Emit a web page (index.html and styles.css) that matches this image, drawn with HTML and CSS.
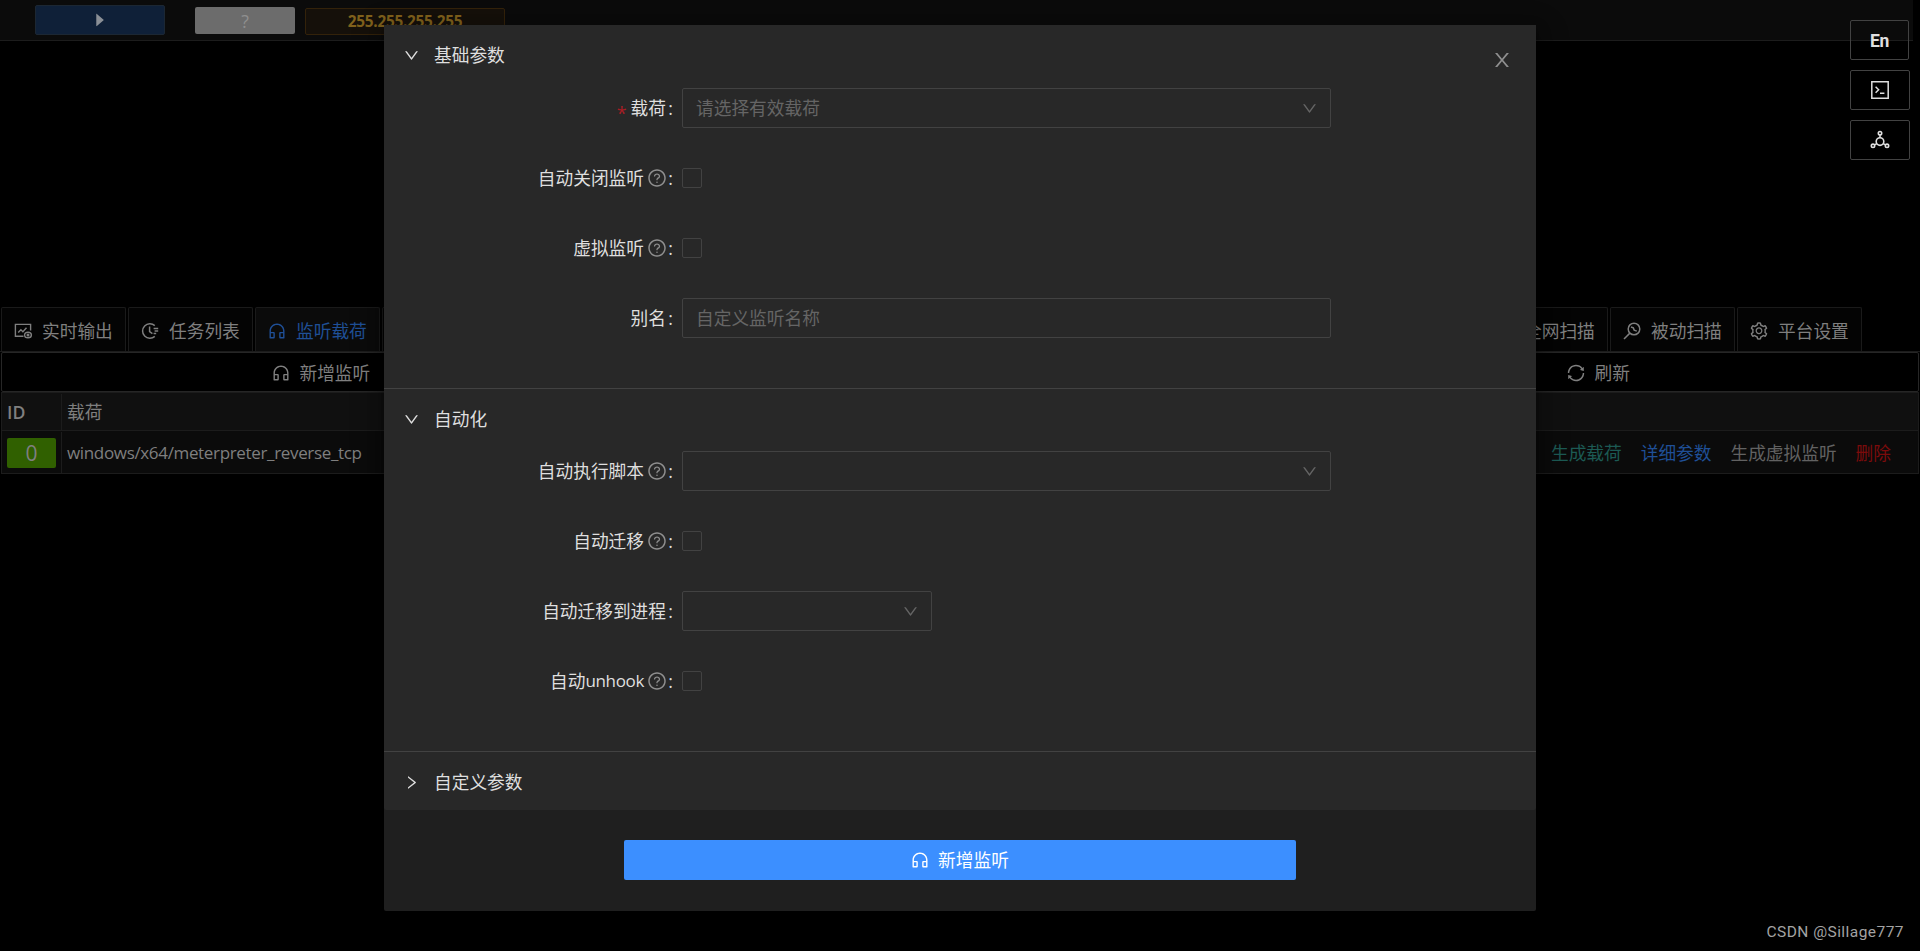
FILE: index.html
```html
<!DOCTYPE html>
<html lang="zh-CN">
<head>
<meta charset="UTF-8">
<title>监听载荷</title>
<link rel="stylesheet" href="styles.css">
</head>
<body>

<svg class="sprite">
    <symbol id="down" viewBox="0 0 1024 1024"><path d="M884 256h-75c-5.1 0-9.9 2.5-12.9 6.6L512 654.2 227.9 262.6c-3-4.1-7.8-6.6-12.9-6.6h-75c-6.5 0-10.3 7.4-6.5 12.7l352.6 486.1c12.8 17.6 39 17.6 51.7 0l352.6-486.1c3.9-5.3.1-12.7-6.4-12.7z"/></symbol>
    <symbol id="right" viewBox="0 0 1024 1024"><path d="M765.7 486.8L314.9 134.7A7.97 7.97 0 00302 141v77.3c0 4.9 2.3 9.6 6.1 12.6l360 281.1-360 281.1c-3.9 3-6.1 7.7-6.1 12.6V883c0 6.7 7.7 10.4 12.9 6.3l450.8-352.1a31.96 31.96 0 000-50.4z"/></symbol>
    <symbol id="close" viewBox="0 0 1024 1024"><path d="M563.8 512l262.5-312.9c4.4-5.2.7-13.1-6.1-13.1h-79.8c-4.7 0-9.2 2.1-12.3 5.7L511.6 449.8 295.1 191.7c-3-3.6-7.5-5.7-12.3-5.7H203c-6.8 0-10.5 7.9-6.1 13.1L459.4 512 196.9 824.9A7.95 7.95 0 00203 838h79.8c4.7 0 9.2-2.1 12.3-5.7l216.5-258.1 216.5 258.1c3 3.6 7.5 5.7 12.3 5.7h79.8c6.8 0 10.5-7.9 6.1-13.1L563.8 512z"/></symbol>
    <symbol id="question" viewBox="0 0 1024 1024"><path d="M512 64C264.6 64 64 264.6 64 512s200.6 448 448 448 448-200.6 448-448S759.4 64 512 64zm0 820c-205.4 0-372-166.6-372-372s166.6-372 372-372 372 166.6 372 372-166.6 372-372 372z"/><path d="M623.6 316.7C593.6 290.4 554 276 512 276s-81.6 14.5-111.6 40.7C369.2 344 352 380.7 352 420v7.6c0 4.4 3.6 8 8 8h48c4.4 0 8-3.6 8-8V420c0-44.1 43.1-80 96-80s96 35.9 96 80c0 31.1-22 59.6-56.1 72.7-21.2 8.1-39.2 22.3-52.1 40.9-13.1 19-19.9 41.8-19.9 64.9V620c0 4.4 3.6 8 8 8h48c4.4 0 8-3.6 8-8v-22.7a48.3 48.3 0 0130.9-44.8c59-22.7 97.1-74.7 97.1-132.5.1-39.3-17.1-76-48.3-103.3zM472 732a40 40 0 1080 0 40 40 0 10-80 0z"/></symbol>
    <symbol id="caret" viewBox="0 0 1024 1024"><path d="M715.8 493.5L335 165.1c-14.2-12.2-35-1.2-35 18.5v656.8c0 19.7 20.8 30.7 35 18.5l380.8-328.4c10.9-9.4 10.9-27.6 0-37z"/></symbol>
    <symbol id="headset" viewBox="0 0 1024 1024"><path d="M512 128c-212.1 0-384 171.9-384 384v360c0 13.3 10.7 24 24 24h184c35.3 0 64-28.7 64-64V624c0-35.3-28.7-64-64-64H200v-48c0-172.3 139.7-312 312-312s312 139.7 312 312v48H688c-35.3 0-64 28.7-64 64v208c0 35.3 28.7 64 64 64h184c13.3 0 24-10.7 24-24V512c0-212.1-171.9-384-384-384zM328 632v192H200V632h128zm496 192H696V632h128v192z"/></symbol>
    <symbol id="sync" viewBox="0 0 1024 1024"><path d="M168 504.2c1-43.7 10-86.1 26.9-126 17.3-41 42.1-77.7 73.7-109.4S337 212.3 378 195c42.4-17.9 87.4-27 133.9-27s91.5 9.1 133.8 27A341.5 341.5 0 01755 268.8c9.9 9.9 19.2 20.4 27.8 31.4l-60.2 47a8 8 0 003 14.1l175.7 43c5 1.2 9.9-2.6 9.9-7.7l.8-180.9c0-6.7-7.7-10.5-12.9-6.3l-56.4 44.1C765.8 155.1 646.2 92 511.8 92 282.7 92 96.3 275.6 92 503.8a8 8 0 008 8.2h60c4.4 0 7.9-3.5 8-7.8zm756 7.8h-60c-4.4 0-7.9 3.5-8 7.8-1 43.7-10 86.1-26.9 126-17.3 41-42.1 77.8-73.7 109.4A342.45 342.45 0 01512.1 856a342.24 342.24 0 01-243.2-100.8c-9.9-9.9-19.2-20.4-27.8-31.4l60.2-47a8 8 0 00-3-14.1l-175.7-43c-5-1.2-9.9 2.6-9.9 7.7l-.7 181c0 6.7 7.7 10.5 12.9 6.3l56.4-44.1C258.2 868.9 377.8 932 512.2 932c229.2 0 415.5-183.7 419.8-411.8a8 8 0 00-8-8.2z"/></symbol>
    <symbol id="setting" viewBox="0 0 1024 1024"><path d="M924.8 625.7l-65.5-56c3.1-19 4.7-38.4 4.7-57.8s-1.6-38.8-4.7-57.8l65.5-56a32.03 32.03 0 009.3-35.2l-.9-2.6a443.74 443.74 0 00-79.7-137.9l-1.8-2.1a32.12 32.12 0 00-35.1-9.5l-81.3 28.9c-30-24.6-63.5-44-99.7-57.6l-15.7-85a32.05 32.05 0 00-25.8-25.7l-2.7-.5c-52.1-9.4-106.9-9.4-159 0l-2.7.5a32.05 32.05 0 00-25.8 25.7l-15.8 85.4a351.86 351.86 0 00-99 57.4l-81.9-29.1a32 32 0 00-35.1 9.5l-1.8 2.1a446.02 446.02 0 00-79.7 137.9l-.9 2.6c-4.5 12.5-.8 26.5 9.3 35.2l66.3 56.6c-3.1 18.8-4.6 38-4.6 57.1 0 19.2 1.5 38.4 4.6 57.1L99 625.5a32.03 32.03 0 00-9.3 35.2l.9 2.6c18.1 50.4 44.9 96.9 79.7 137.9l1.8 2.1a32.12 32.12 0 0035.1 9.5l81.9-29.1c29.8 24.5 63.1 43.9 99 57.4l15.8 85.4a32.05 32.05 0 0025.8 25.7l2.7.5a449.4 449.4 0 00159 0l2.7-.5a32.05 32.05 0 0025.8-25.7l15.7-85a350 350 0 0099.7-57.6l81.3 28.9a32 32 0 0035.1-9.5l1.8-2.1c34.8-41.1 61.6-87.5 79.7-137.9l.9-2.6c4.5-12.3.8-26.3-9.3-35zM788.3 465.9c2.5 15.1 3.8 30.6 3.8 46.1s-1.3 31-3.8 46.1l-6.6 40.1 74.7 63.9a370.03 370.03 0 01-42.6 73.6L721 702.8l-31.4 25.8c-23.9 19.6-50.5 35-79.3 45.8l-38.1 14.3-17.9 97a377.5 377.5 0 01-85 0l-17.9-97.2-37.8-14.5c-28.5-10.8-55-26.2-78.7-45.7l-31.4-25.9-93.4 33.2c-17-22.9-31.2-47.6-42.6-73.6l75.5-64.5-6.5-40c-2.4-14.9-3.7-30.3-3.7-45.5 0-15.3 1.2-30.6 3.7-45.5l6.5-40-75.5-64.5c11.3-26.1 25.6-50.7 42.6-73.6l93.4 33.2 31.4-25.9c23.7-19.5 50.2-34.9 78.7-45.7l37.9-14.3 17.9-97.2c28.1-3.2 56.8-3.2 85 0l17.9 97 38.1 14.3c28.7 10.8 55.4 26.2 79.3 45.8l31.4 25.8 92.8-32.9c17 22.9 31.2 47.6 42.6 73.6L781.8 426l6.5 39.9zM512 326c-97.2 0-176 78.8-176 176s78.8 176 176 176 176-78.8 176-176-78.8-176-176-176zm79.2 255.2A111.6 111.6 0 01512 614c-29.9 0-58-11.7-79.2-32.8A111.6 111.6 0 01400 502c0-29.9 11.7-58 32.8-79.2C454 401.6 482.1 390 512 390c29.9 0 58 11.6 79.2 32.8A111.6 111.6 0 01624 502c0 29.9-11.7 58-32.8 79.2z"/></symbol>
    <symbol id="fund" viewBox="-1 -1 20 20"><g fill="none" stroke="currentColor" stroke-width="1.4"><path d="M9.5 14.3H1.4V2.4h15.2v6"/><path d="M4.2 10.6l2.7-2.9 2 2 3.6-4"/><ellipse cx="14" cy="13" rx="3.4" ry="2.8"/><circle cx="14" cy="13" r=".8"/></g></symbol>
    <symbol id="time" viewBox="-1 -1 20 20"><g fill="none" stroke="currentColor" stroke-width="1.5"><path d="M13.8 3.6A7.3 7.3 0 1 0 13.8 14.4"/><path d="M8.6 4.6v5l2.8 2"/><path d="M12.6 6.6h4.6M13.6 9h3.6M12.6 11.4h2.6"/></g></symbol>
    <symbol id="scan" viewBox="-1 -1 20 20"><g fill="none" stroke="currentColor" stroke-width="1.5"><circle cx="11" cy="7" r="5.8"/><path d="M6.9 11.1L1 17"/><path d="M8 5l2.3.9.9 2.2 2.6 1"/></g></symbol>
    <symbol id="code" viewBox="-1 -1 20 20"><g fill="none" stroke="currentColor" stroke-width="1.5"><path d="M.8.8h16.4v16.4H.8z"/><path d="M4.6 5.8l3 3-3 3M9 12.2h4.4"/></g></symbol>
    <symbol id="unit" viewBox="-1 -1 20 20"><g fill="none" stroke="currentColor" stroke-width="1.6"><circle cx="9" cy="10.6" r="3.8"/><circle cx="9" cy="2.2" r="1.7"/><circle cx="2" cy="14.8" r="1.7"/><circle cx="16" cy="14.8" r="1.7"/><path d="M9 4v2.8M5.8 12.6l-2.4 1.3M12.2 12.6l2.4 1.3"/></g></symbol>
</svg>

<div class="page">
    <div class="topbar">
        <div class="btn-run"><svg class="icon"><use href="#caret"/></svg></div>
        <div class="btn-unknown">?</div>
        <div class="ip-tag">255.255.255.255</div>
    </div>

    <div class="tabs">
        <div class="tab"><svg class="icon"><use href="#fund"/></svg>实时输出</div>
        <div class="tab"><svg class="icon"><use href="#time"/></svg>任务列表</div>
        <div class="tab active"><svg class="icon"><use href="#headset"/></svg>监听载荷</div>
        <div class="tab tab-rest"></div>
        <div class="tab"><svg class="icon"><use href="#scan"/></svg>全网扫描</div>
        <div class="tab"><svg class="icon"><use href="#scan"/></svg>被动扫描</div>
        <div class="tab"><svg class="icon"><use href="#setting"/></svg>平台设置</div>
    </div>

    <div class="toolbar">
        <div class="tool"><svg class="icon"><use href="#headset"/></svg>新增监听</div>
        <div class="tool"></div>
        <div class="tool"><svg class="icon"><use href="#sync"/></svg>刷新</div>
    </div>

    <div class="table">
        <div class="row head">
            <div class="cell-id">ID</div>
            <div class="cell-main">载荷</div>
        </div>
        <div class="row">
            <div class="cell-id"><span class="badge">0</span></div>
            <div class="cell-main latin">windows/x64/meterpreter_reverse_tcp</div>
            <div class="actions">
                <a class="teal">生成载荷</a>
                <a class="blue">详细参数</a>
                <a class="grey">生成虚拟监听</a>
                <a class="red">删除</a>
            </div>
        </div>
    </div>
</div>

<div class="modal">
    <svg class="icon modal-close"><use href="#close"/></svg>
    <div class="section">
        <div class="section-head"><svg class="icon"><use href="#down"/></svg>基础参数</div>
        <div class="form">
            <div class="field">
                <div class="label"><i>*</i>载荷<b>:</b></div>
                <div class="input">请选择有效载荷<svg class="icon"><use href="#down"/></svg></div>
            </div>
            <div class="field">
                <div class="label">自动关闭监听<svg class="icon"><use href="#question"/></svg><b>:</b></div>
                <div class="checkbox"></div>
            </div>
            <div class="field">
                <div class="label">虚拟监听<svg class="icon"><use href="#question"/></svg><b>:</b></div>
                <div class="checkbox"></div>
            </div>
            <div class="field">
                <div class="label">别名<b>:</b></div>
                <div class="input">自定义监听名称</div>
            </div>
        </div>
    </div>
    <div class="section">
        <div class="section-head"><svg class="icon"><use href="#down"/></svg>自动化</div>
        <div class="form form-auto">
            <div class="field">
                <div class="label">自动执行脚本<svg class="icon"><use href="#question"/></svg><b>:</b></div>
                <div class="input"><svg class="icon"><use href="#down"/></svg></div>
            </div>
            <div class="field">
                <div class="label">自动迁移<svg class="icon"><use href="#question"/></svg><b>:</b></div>
                <div class="checkbox"></div>
            </div>
            <div class="field">
                <div class="label">自动迁移到进程<b>:</b></div>
                <div class="input short"><svg class="icon"><use href="#down"/></svg></div>
            </div>
            <div class="field">
                <div class="label">自动<span class="latin">unhook</span><svg class="icon"><use href="#question"/></svg><b>:</b></div>
                <div class="checkbox"></div>
            </div>
        </div>
    </div>
    <div class="section">
        <div class="section-head"><svg class="icon"><use href="#right"/></svg>自定义参数</div>
    </div>
    <div class="modal-footer">
        <div class="btn-submit"><svg class="icon"><use href="#headset"/></svg>新增监听</div>
    </div>
</div>

<div class="float-buttons">
    <div class="float-btn lang">En</div>
    <div class="float-btn"><svg class="icon"><use href="#code"/></svg></div>
    <div class="float-btn"><svg class="icon"><use href="#unit"/></svg></div>
</div>

<div class="watermark">CSDN @Sillage777</div>

</body>
</html>
```
FILE: styles.css
```css
* {
    box-sizing: border-box;
}

body {
    margin: 0;
    height: 951px;
    overflow: hidden;
    position: relative;
    background: #000;
    color: #7f7f7f;
    font-family: "Open Sans", "Noto Sans CJK SC", sans-serif;
    font-size: 17.7px;
    line-height: 28px;
}

.sprite {
    display: none;
}

.icon {
    width: 20px;
    height: 20px;
    fill: currentColor;
    flex: none;
}

.latin {
    font-size: 17px;
    letter-spacing: -.34px;
}

/* top bar */
.topbar {
    display: flex;
    align-items: flex-start;
    width: 1913px;
    height: 41px;
    padding-left: 35px;
    background: #0b0b0b;
    border-bottom: 1px solid #1c1c1c;
}

.btn-run {
    display: flex;
    align-items: center;
    justify-content: center;
    width: 130px;
    height: 30px;
    margin-top: 5px;
    background: #0f2038;
    border: 1px solid #1c2733;
    border-radius: 2px;
    color: #8a8f96;
}

.btn-run .icon {
    width: 18px;
    height: 18px;
}

.btn-unknown {
    width: 100px;
    height: 27px;
    margin: 7px 10px 0 30px;
    background: #6c6c6c;
    border-radius: 2px;
    color: #8f8f8f;
    text-align: center;
    line-height: 28px;
}

.ip-tag {
    width: 200px;
    height: 27px;
    margin-top: 8px;
    background: #15100a;
    border: 1px solid #33220a;
    border-radius: 2px;
    color: #80611c;
    font-size: 15.4px;
    font-weight: bold;
    letter-spacing: -.3px;
    line-height: 26px;
    text-align: center;
}

/* tabs */
.tabs {
    display: flex;
    gap: 2px;
    margin-top: 266px;
    padding-left: 1px;
    border-bottom: 1px solid #1c1c1c;
}

.tab {
    display: flex;
    align-items: center;
    gap: 9px;
    width: 125px;
    height: 44px;
    padding: 2px 0 0 11px;
    flex: none;
    white-space: nowrap;
    background: #040404;
    border: 1px solid #1a1a1a;
    border-bottom: none;
    border-radius: 2px 2px 0 0;
}

.tab.active {
    background: #0b0b0b;
    color: #1f4f96;
}

.tab-rest {
    width: 1099px;
}

/* card toolbar */
.toolbar {
    display: grid;
    grid-template-columns: repeat(3, 1fr);
    height: 40px;
    margin: 0 1px;
    border: 1px solid #262626;
    border-radius: 2px;
}

.tool {
    display: flex;
    align-items: center;
    justify-content: center;
    gap: 8px;
    padding: 1px 1px 0 0;
}

/* listener table */
.table {
    margin: 0 1px;
    border: 1px solid #1c1c1c;
    background: #0b0b0b;
}

.row {
    display: flex;
    align-items: center;
    height: 42px;
    padding-top: 1px;
}

.row.head {
    height: 38px;
    background: #101010;
    border-bottom: 1px solid #1c1c1c;
}

.cell-id {
    display: flex;
    align-items: center;
    align-self: stretch;
    width: 60px;
    padding-left: 5px;
    border-right: 1px solid #1c1c1c;
}

.head .cell-id {
    font-weight: 600;
}

.cell-main {
    padding-left: 5px;
}

.badge {
    width: 49px;
    height: 30px;
    background: #306000;
    border-radius: 2px;
    font-size: 21px;
    line-height: 30px;
    text-align: center;
}

.actions {
    display: flex;
    gap: 19px;
    margin-left: auto;
    padding-right: 27px;
}

.teal {
    color: #1c5a54;
}

.blue {
    color: #1f4f96;
}

.grey {
    color: #626262;
}

.red {
    color: #7c0b0b;
}

/* modal */
.modal {
    position: absolute;
    left: 384px;
    top: 25px;
    width: 1152px;
    height: 886px;
    background: #1f1f1f;
    border-radius: 2px;
    color: #dfdfdf;
    box-shadow: 0 3px 6px -4px rgba(0,0,0,.48), 0 6px 16px rgba(0,0,0,.32), 0 9px 28px 8px rgba(0,0,0,.2);
}

.modal-close {
    position: absolute;
    top: 24px;
    right: 23px;
    width: 22px;
    height: 22px;
    color: #8f8f8f;
}

.section {
    background: #282828;
    border-bottom: 1px solid #424242;
}

.section:nth-of-type(3) {
    border-bottom: none;
    border-radius: 0 0 2px 2px;
}

.section-head {
    display: flex;
    align-items: center;
    gap: 14px;
    height: 58px;
    padding: 2px 0 0 19px;
}

.section-head .icon {
    width: 17px;
    height: 17px;
}

.form {
    display: flex;
    flex-direction: column;
    gap: 30px;
    padding: 5px 0 20px;
}

.form-auto {
    padding-top: 4px;
}

.field {
    display: flex;
    align-items: center;
    height: 40px;
}

.field:last-child {
    margin-bottom: 30px;
}

.label {
    display: flex;
    align-items: center;
    justify-content: flex-end;
    width: 289px;
    margin-right: 9px;
}

.label i {
    height: 18px;
    margin-right: 4px;
    color: #a61d24;
    font-family: "Open Sans", sans-serif;
    font-size: 18px;
    font-style: normal;
}

.label b {
    width: 7px;
    font-weight: normal;
    text-align: right;
}

.label .icon {
    margin: 0 -1px 0 3px;
    color: #8f8f8f;
}

.input {
    display: flex;
    align-items: center;
    width: 649px;
    height: 40px;
    padding: 0 12px 0 13px;
    border: 1px solid #424242;
    border-radius: 2px;
    color: #656565;
}

.input .icon {
    width: 17px;
    height: 17px;
    margin-left: auto;
}

.input.short {
    width: 250px;
}

.checkbox {
    width: 20px;
    height: 20px;
    border: 1px solid #424242;
    border-radius: 2px;
}

.modal-footer {
    display: flex;
    justify-content: center;
    padding-top: 30px;
}

.btn-submit {
    display: flex;
    align-items: center;
    justify-content: center;
    gap: 8px;
    width: 672px;
    height: 40px;
    padding-right: 1px;
    background: #3c8fff;
    border-radius: 2px;
    color: #fff;
}

/* floating buttons, right side */
.float-buttons {
    position: absolute;
    top: 20px;
    right: 10px;
    display: flex;
    flex-direction: column;
    gap: 10px;
}

.float-btn {
    display: flex;
    align-items: center;
    justify-content: center;
    width: 60px;
    height: 40px;
    border: 1px solid #424242;
    border-radius: 2px;
    color: #dfdfdf;
}

.lang {
    width: 59px;
    padding-top: 1px;
    font-family: Roboto, sans-serif;
    font-size: 17.5px;
    font-weight: bold;
    letter-spacing: -.4px;
}

.watermark {
    position: absolute;
    right: 16px;
    bottom: 5px;
    color: #a3a3a3;
    font-family: Roboto, sans-serif;
    font-size: 15.5px;
    letter-spacing: .45px;
}
```
